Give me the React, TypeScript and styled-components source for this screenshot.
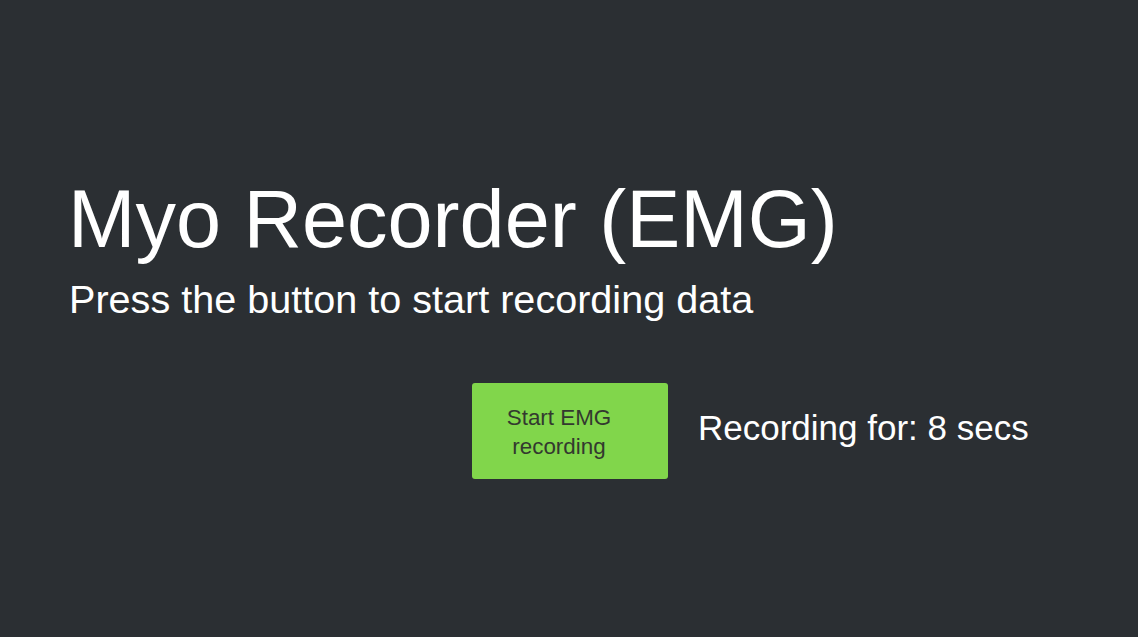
import React from "react";
import styled, { createGlobalStyle } from "styled-components";

const Global = createGlobalStyle`
  html, body {
    margin: 0;
    padding: 0;
    background: #2b2f33;
  }
  body {
    font-family: "Liberation Sans", Arial, sans-serif;
    color: #ffffff;
  }
`;

const Page = styled.main`
  box-sizing: border-box;
  width: 100%;
  min-height: 637px;
  padding: 173px 64px 0 68px;
  display: flex;
  flex-direction: column;
`;

const Title = styled.h1`
  margin: 0;
  font-size: 81px;
  font-weight: 400;
  line-height: normal;
  color: #ffffff;
`;

const Subtitle = styled.p`
  margin: 11px 0 0 1px;
  font-size: 39.6px;
  font-weight: 400;
  line-height: normal;
  color: #ffffff;
`;

const Controls = styled.div`
  display: flex;
  align-items: center;
  gap: 30px;
  margin-top: 61px;
  margin-left: 404px;
`;

const RecordButton = styled.button`
  box-sizing: border-box;
  width: 196px;
  height: 96px;
  border: none;
  border-radius: 3px;
  background: #81d64b;
  color: #33392f;
  font-family: "Liberation Sans", Arial, sans-serif;
  font-size: 22.4px;
  line-height: 29px;
  padding: 1px 30px 0 8px;
  cursor: pointer;
`;

const Duration = styled.span`
  font-size: 35px;
  line-height: normal;
  color: #ffffff;
  margin-top: -6px;
`;

export default function App() {
  return (
    <>
      <Global />
      <Page>
        <Title>Myo Recorder (EMG)</Title>
        <Subtitle>Press the button to start recording data</Subtitle>
        <Controls>
          <RecordButton>Start EMG recording</RecordButton>
          <Duration>Recording for: 8 secs</Duration>
        </Controls>
      </Page>
    </>
  );
}
